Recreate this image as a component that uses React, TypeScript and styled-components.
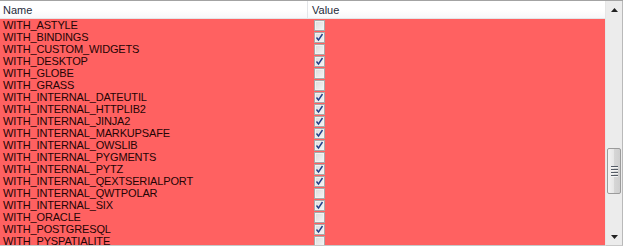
import styled, { createGlobalStyle } from 'styled-components';

const GlobalStyle = createGlobalStyle`
  html, body {
    margin: 0;
    padding: 0;
    background: #ffffff;
  }
  body {
    font-family: "Segoe UI", "Liberation Sans", Arial, sans-serif;
  }
`;

const Frame = styled.div`
  width: 623px;
  height: 246px;
  box-sizing: border-box;
  border-top: 1px solid #a3a3a3;
  display: flex;
  overflow: hidden;
  background: #ffffff;
`;

const View = styled.div`
  flex: 1;
  display: flex;
  flex-direction: column;
  height: 244px;
  overflow: hidden;
  border-bottom: 1px solid #c8c8c8;
`;

const Header = styled.div`
  display: grid;
  grid-template-columns: 308px 1fr;
  height: 17px;
  flex: none;
  background: linear-gradient(#ffffff 0%, #ffffff 55%, #f7f8fa 100%);
  border-bottom: 1px solid #e3e5e8;
`;

const HeaderCell = styled.div<{ $last?: boolean }>`
  display: flex;
  align-items: center;
  padding-left: ${(p) => (p.$last ? '4px' : '3px')};
  font-size: 11px;
  color: #1e2a3a;
  border-right: ${(p) => (p.$last ? 'none' : '1px solid #e3e5e8')};
`;

const Body = styled.div`
  flex: 1;
  background: #ff6161;
  overflow: hidden;
`;

const Row = styled.div`
  display: grid;
  grid-template-columns: 308px 1fr;
  height: 12px;
`;

const NameCell = styled.div`
  padding-left: 3px;
  font-size: 11px;
  line-height: 12px;
  letter-spacing: -0.15px;
  color: #240404;
  white-space: nowrap;
`;

const ValueCell = styled.div`
  display: flex;
  align-items: center;
  padding-left: 6px;
`;

const Box = styled.div`
  width: 9px;
  height: 9px;
  border: 1px solid #a9a9a9;
  background: linear-gradient(135deg, #dcdcdc 0%, #f4f4f4 100%);
  box-shadow: inset 0 0 0 1px #f2f2f2;
  display: flex;
  align-items: center;
  justify-content: center;
`;

const Scrollbar = styled.div`
  width: 16px;
  height: 244px;
  flex: none;
  display: flex;
  flex-direction: column;
  background: #ececec;
  border-left: 1px solid #e6e6e6;
  border-right: 1px solid #b9b9b9;
  border-bottom: 1px solid #c8c8c8;
`;

const ArrowButton = styled.div`
  height: 17px;
  flex: none;
  display: flex;
  align-items: center;
  justify-content: center;
`;

const Track = styled.div`
  flex: 1;
  display: flex;
  flex-direction: column;
  padding: 130px 1px 0 1px;
`;

const Thumb = styled.div`
  height: 46px;
  box-sizing: border-box;
  border: 1px solid #9b9b9b;
  border-radius: 2px;
  background: linear-gradient(90deg, #f2f2f2 0%, #e6e6e6 50%, #d6d6d6 51%, #cfcfcf 100%);
  display: flex;
  flex-direction: column;
  align-items: center;
  justify-content: center;
  gap: 1px;
`;

const Grip = styled.div`
  width: 7px;
  height: 1px;
  background: #555c66;
  border-bottom: 1px solid #f4f4f4;
`;

const rows: [string, boolean][] = [
  ['WITH_ASTYLE', false],
  ['WITH_BINDINGS', true],
  ['WITH_CUSTOM_WIDGETS', false],
  ['WITH_DESKTOP', true],
  ['WITH_GLOBE', false],
  ['WITH_GRASS', false],
  ['WITH_INTERNAL_DATEUTIL', true],
  ['WITH_INTERNAL_HTTPLIB2', true],
  ['WITH_INTERNAL_JINJA2', true],
  ['WITH_INTERNAL_MARKUPSAFE', true],
  ['WITH_INTERNAL_OWSLIB', true],
  ['WITH_INTERNAL_PYGMENTS', false],
  ['WITH_INTERNAL_PYTZ', true],
  ['WITH_INTERNAL_QEXTSERIALPORT', true],
  ['WITH_INTERNAL_QWTPOLAR', false],
  ['WITH_INTERNAL_SIX', true],
  ['WITH_ORACLE', false],
  ['WITH_POSTGRESQL', true],
  ['WITH_PYSPATIALITE', false],
];

function Check() {
  return (
    <svg width="9" height="9" viewBox="0 0 9 9">
      <path d="M1.5 4.5 L3.5 7 L7.5 1" fill="none" stroke="#23408a" strokeWidth="1.4" />
    </svg>
  );
}

function App() {
  return (
    <>
      <GlobalStyle />
      <Frame>
        <View>
          <Header>
            <HeaderCell>Name</HeaderCell>
            <HeaderCell $last>Value</HeaderCell>
          </Header>
          <Body>
            {rows.map(([name, on]) => (
              <Row key={name}>
                <NameCell>{name}</NameCell>
                <ValueCell>
                  <Box>{on && <Check />}</Box>
                </ValueCell>
              </Row>
            ))}
          </Body>
        </View>
        <Scrollbar>
          <ArrowButton>
            <svg width="7" height="4" viewBox="0 0 7 4">
              <path d="M0 4 L3.5 0 L7 4 Z" fill="#222" />
            </svg>
          </ArrowButton>
          <Track>
            <Thumb>
              <Grip />
              <Grip />
              <Grip />
              <Grip />
            </Thumb>
          </Track>
          <ArrowButton>
            <svg width="7" height="4" viewBox="0 0 7 4">
              <path d="M0 0 L7 0 L3.5 4 Z" fill="#222" />
            </svg>
          </ArrowButton>
        </Scrollbar>
      </Frame>
    </>
  );
}

export default App;
